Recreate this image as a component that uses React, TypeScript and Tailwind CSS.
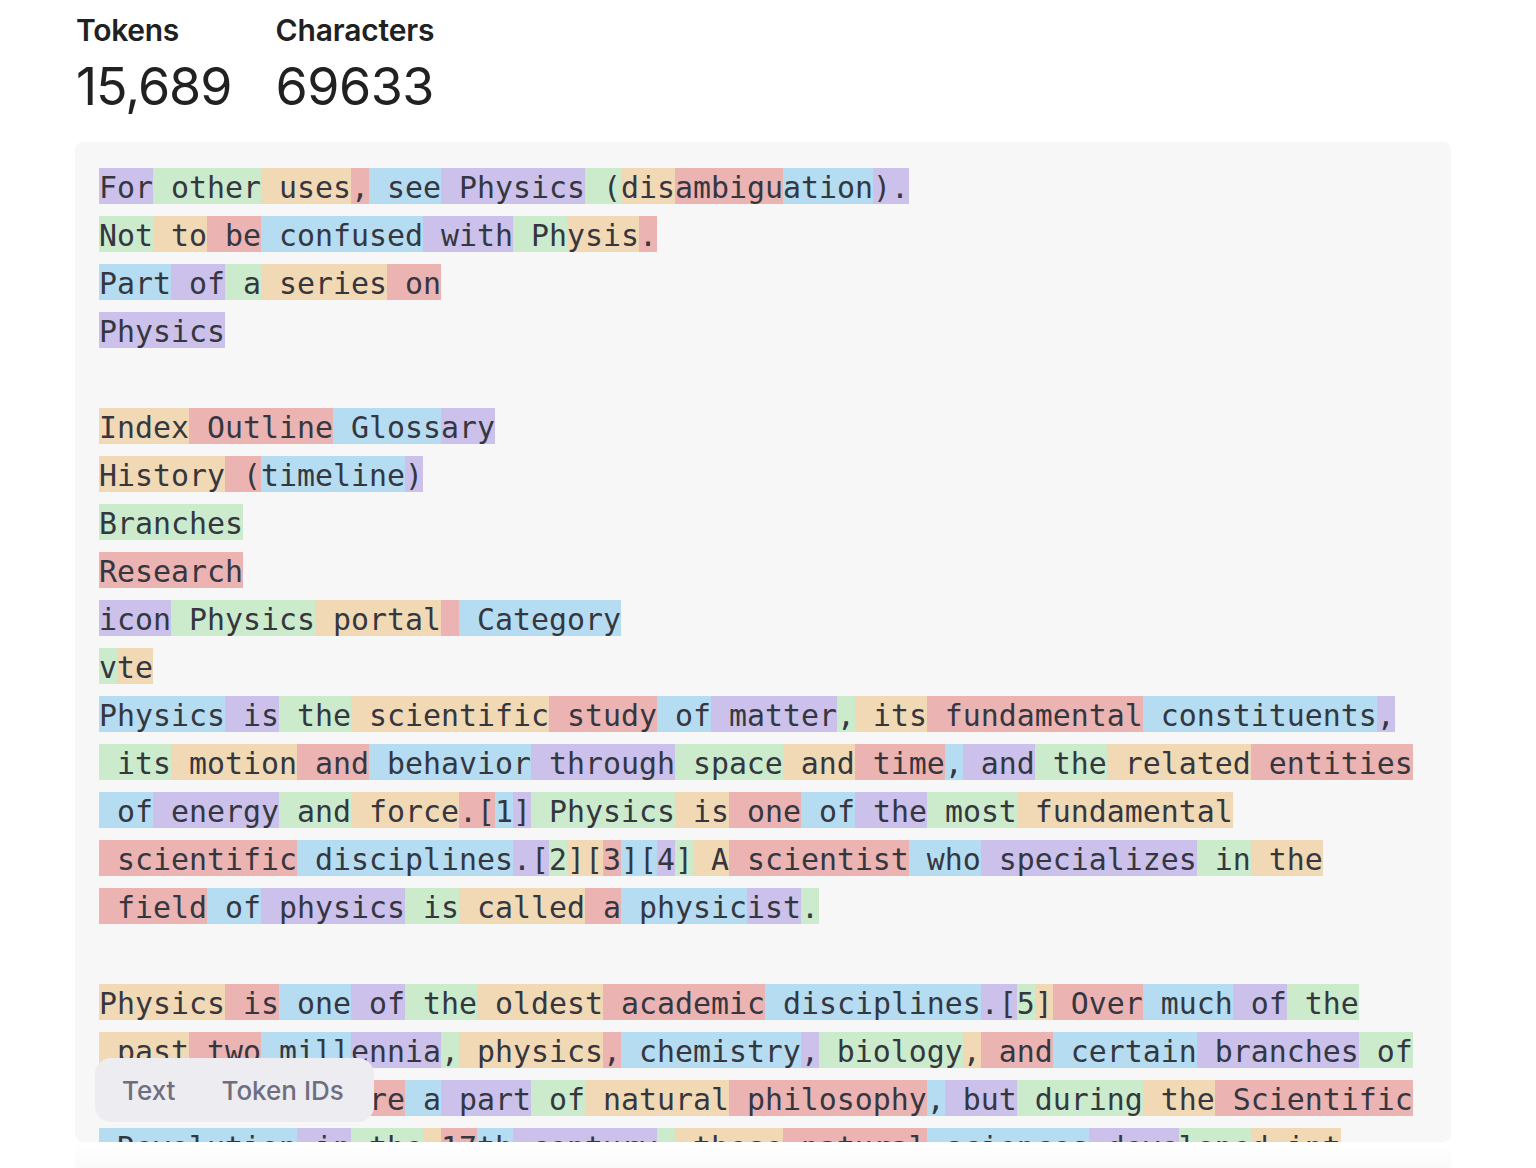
import React from "react";

type C = "P" | "G" | "O" | "R" | "B";
type Tok = [string, C];

const COLORS: Record<C, string> = {
  P: "bg-[#cbc1eb]",
  G: "bg-[#cbebcc]",
  O: "bg-[#f2d9b5]",
  R: "bg-[#ecb3b3]",
  B: "bg-[#b6dcf1]",
};

const ROWS: Tok[][] = [
  [["For", "P"], [" other", "G"], [" uses", "O"], [",", "R"], [" see", "B"], [" Physics", "P"], [" (", "G"], ["dis", "O"], ["ambigu", "R"], ["ation", "B"], [").", "P"]],
  [["Not", "G"], [" to", "O"], [" be", "R"], [" confused", "B"], [" with", "P"], [" Ph", "G"], ["ysis", "O"], [".", "R"]],
  [["Part", "B"], [" of", "P"], [" a", "G"], [" series", "O"], [" on", "R"]],
  [["Physics", "P"]],
  [],
  [["Index", "O"], [" Outline", "R"], [" Gloss", "B"], ["ary", "P"]],
  [["History", "O"], [" (", "R"], ["timeline", "B"], [")", "P"]],
  [["Branches", "G"]],
  [["Research", "R"]],
  [["icon", "P"], [" Physics", "G"], [" portal", "O"], [" ", "R"], [" Category", "B"]],
  [["v", "G"], ["te", "O"]],
  [["Physics", "B"], [" is", "P"], [" the", "G"], [" scientific", "O"], [" study", "R"], [" of", "B"], [" matter", "P"], [",", "G"], [" its", "O"], [" fundamental", "R"], [" constituents", "B"], [",", "P"]],
  [[" its", "G"], [" motion", "O"], [" and", "R"], [" behavior", "B"], [" through", "P"], [" space", "G"], [" and", "O"], [" time", "R"], [",", "B"], [" and", "P"], [" the", "G"], [" related", "O"], [" entities", "R"]],
  [[" of", "B"], [" energy", "P"], [" and", "G"], [" force", "O"], [".[", "R"], ["1", "B"], ["]", "P"], [" Physics", "G"], [" is", "O"], [" one", "R"], [" of", "B"], [" the", "P"], [" most", "G"], [" fundamental", "O"]],
  [[" scientific", "R"], [" disciplines", "B"], [".[", "P"], ["2", "G"], ["][", "O"], ["3", "R"], ["][", "B"], ["4", "P"], ["]", "G"], [" A", "O"], [" scientist", "R"], [" who", "B"], [" specializes", "P"], [" in", "G"], [" the", "O"]],
  [[" field", "R"], [" of", "B"], [" physics", "P"], [" is", "G"], [" called", "O"], [" a", "R"], [" physic", "B"], ["ist", "P"], [".", "G"]],
  [],
  [["Physics", "O"], [" is", "R"], [" one", "B"], [" of", "P"], [" the", "G"], [" oldest", "O"], [" academic", "R"], [" disciplines", "B"], [".[", "P"], ["5", "G"], ["]", "O"], [" Over", "R"], [" much", "B"], [" of", "P"], [" the", "G"]],
  [[" past", "O"], [" two", "R"], [" mill", "B"], ["ennia", "P"], [",", "G"], [" physics", "O"], [",", "R"], [" chemistry", "B"], [",", "P"], [" biology", "G"], [",", "O"], [" and", "R"], [" certain", "B"], [" branches", "P"], [" of", "G"]],
  [[" mathematics", "G"], [" were", "R"], [" a", "B"], [" part", "P"], [" of", "G"], [" natural", "O"], [" philosophy", "R"], [",", "B"], [" but", "P"], [" during", "G"], [" the", "O"], [" Scientific", "R"]],
  [[" Revolution", "B"], [" in", "P"], [" the", "G"], [" ", "O"], ["17", "R"], ["th", "B"], [" century", "P"], [",", "G"], [" these", "O"], [" natural", "R"], [" sciences", "B"], [" deve", "P"], ["lope", "G"], ["d int", "O"]],
  [[" separate", "R"], [" research", "B"], [" endeavors", "P"]],
];

export default function App() {
  return (
    <div className="min-h-[1168px] w-full bg-white text-[#202123]" style={{ fontFamily: "Inter, 'Liberation Sans', sans-serif" }}>
      <div className="ml-[75px] w-[1376px] pt-[8px]">
        <div className="flex gap-[44px] pl-[1px]">
          <div className="flex flex-col">
            <div className="text-[30px] font-semibold leading-[44px] tracking-[-0.01em]">Tokens</div>
            <div className="text-[52px] font-normal leading-[70px] tracking-[-0.02em]">15,689</div>
          </div>
          <div className="flex flex-col">
            <div className="text-[30px] font-semibold leading-[44px] tracking-[-0.005em]">Characters</div>
            <div className="text-[52px] font-normal leading-[70px] tracking-[-0.01em]">69633</div>
          </div>
        </div>
        <div className="relative mt-[20px] h-[1000px] overflow-hidden rounded-[8px] bg-[#f7f7f7]">
          <div
            className="flex flex-col gap-[12px] pl-[24px] pt-[26px] text-[29.9px] text-[#353740]"
            style={{ fontFamily: "'DejaVu Sans Mono', 'Liberation Mono', monospace" }}
          >
            {ROWS.map((row, i) => (
              <div key={i} className="flex h-[36px] whitespace-pre">
                {row.map(([t, c], j) => (
                  <span key={j} className={`${COLORS[c]} block h-[36px] pt-[3px] leading-[33px]`}>
                    {t}
                  </span>
                ))}
              </div>
            ))}
          </div>
          <div className="absolute bottom-[20px] left-[20px] flex h-[64px] items-center rounded-[16px] bg-[#ececf1] p-[4px] text-[26px] font-medium text-[#6e6e80]">
            <div className="flex h-[56px] items-center pl-[23px] pr-[22px]">Text</div>
            <div className="flex h-[56px] items-center pl-[24px] pr-[26px]">Token IDs</div>
          </div>
        </div>
        <div className="h-[26px] bg-gradient-to-b from-white to-[#fafafa]" />
      </div>
    </div>
  );
}
